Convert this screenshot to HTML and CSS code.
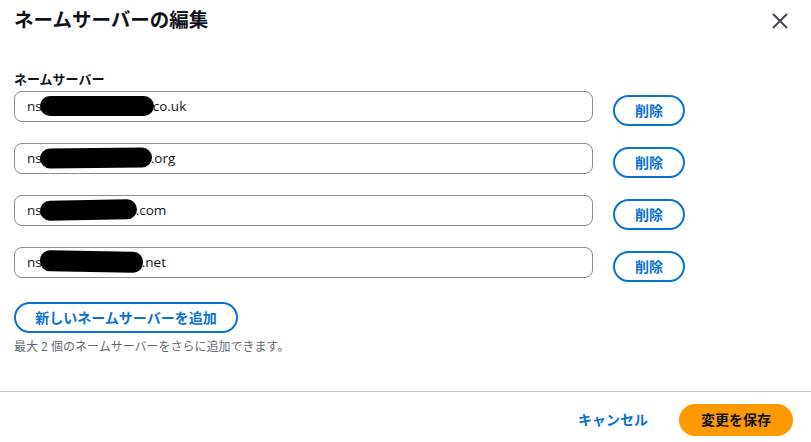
FILE: index.html
```html
<!DOCTYPE html>
<html lang="ja">
<head>
<meta charset="utf-8">
<title>ネームサーバーの編集</title>
<link rel="stylesheet" href="styles.css">
</head>
<body>
<div class="modal">
  <header class="modal-header">
    <h2 class="title">ネームサーバーの編集</h2>
    <button class="close" aria-label="閉じる">
      <svg width="16" height="16" viewBox="0 0 16 16"><path d="M1.5 1.5 L14.5 14.5 M14.5 1.5 L1.5 14.5" stroke="#424650" stroke-width="2" fill="none" stroke-linecap="round"/></svg>
    </button>
  </header>
  <section class="modal-body">
    <div class="label">ネームサーバー</div>
    <div class="rows">
      <div class="row">
        <div class="field">ns<span class="blot b1"></span>co.uk</div>
        <button class="btn-outline del">削除</button>
      </div>
      <div class="row">
        <div class="field">ns<span class="blot b2"></span>.org</div>
        <button class="btn-outline del">削除</button>
      </div>
      <div class="row">
        <div class="field">ns<span class="blot b3"></span>.com</div>
        <button class="btn-outline del">削除</button>
      </div>
      <div class="row">
        <div class="field">ns<span class="blot b4"></span>.net</div>
        <button class="btn-outline del">削除</button>
      </div>
    </div>
    <button class="btn-outline add">新しいネームサーバーを追加</button>
    <p class="help">最大 2 個のネームサーバーをさらに追加できます。</p>
  </section>
  <footer class="modal-footer">
    <button class="cancel">キャンセル</button>
    <button class="save">変更を保存</button>
  </footer>
</div>
</body>
</html>
```
FILE: styles.css
```css
html, body {
  margin: 0;
  padding: 0;
  background: #ffffff;
}
body {
  font-family: "Open Sans", "Noto Sans", "Noto Sans CJK JP", sans-serif;
  color: #0f141a;
}
button {
  font-family: inherit;
  cursor: pointer;
}
.modal {
  width: 811px;
  height: 442px;
  overflow: hidden;
}
.modal-header {
  display: flex;
  justify-content: space-between;
  align-items: flex-start;
  padding: 7px 23px 0 14px;
}
.title {
  margin: 0;
  font-size: 19.5px;
  line-height: 26px;
  font-weight: 700;
  color: #0f141a;
}
.close {
  border: none;
  background: none;
  padding: 0;
  margin-top: 6px;
  width: 16px;
  height: 16px;
  display: block;
}
.close svg { display: block; }
.modal-body {
  padding: 0 14px;
}
.label {
  margin-top: 37px;
  font-size: 13px;
  line-height: 18px;
  font-weight: 700;
  margin-bottom: 3px;
}
.rows {
  display: flex;
  flex-direction: column;
  gap: 17px;
}
.row {
  display: flex;
  align-items: flex-start;
  gap: 20px;
}
.field {
  box-sizing: border-box;
  width: 579px;
  height: 31px;
  border: 1px solid #8c8c94;
  border-radius: 8px;
  padding: 0 12px;
  font-size: 13.5px;
  line-height: 29px;
  color: #0f141a;
  white-space: nowrap;
}
.blot {
  display: inline-block;
  vertical-align: middle;
  height: 20px;
  background: #000;
  border-radius: 10px;
  margin: -3px -1px 0 -2px;
}
.b1 { width: 114px; }
.b2 { width: 112px; transform: rotate(-0.5deg); }
.b3 { width: 97px; transform: rotate(-1deg); }
.b4 { width: 103px; height: 21px; transform: rotate(1deg); }
.btn-outline {
  box-sizing: border-box;
  height: 31px;
  border: 2px solid #0972d3;
  border-radius: 16px;
  background: #fff;
  color: #0972d3;
  font-size: 14px;
  font-weight: 700;
  line-height: 27px;
  padding: 0 20px;
  white-space: nowrap;
}
.del {
  width: 72px;
  padding: 0;
  margin-top: 4px;
}
.add {
  margin-top: 20px;
  display: block;
  width: 224px;
  padding: 0;
}
.help {
  margin: 6px 0 0;
  font-size: 12px;
  line-height: 16px;
  color: #656871;
}
.modal-footer {
  margin-top: 36px;
  border-top: 1px solid #c6c6cd;
  padding: 12px 18px 0 14px;
  display: flex;
  justify-content: flex-end;
  align-items: center;
  gap: 11px;
}
.cancel {
  border: none;
  background: none;
  color: #0972d3;
  font-size: 14px;
  font-weight: 700;
  padding: 4px 20px;
  line-height: 24px;
}
.save {
  box-sizing: border-box;
  width: 114px;
  height: 32px;
  border: 2px solid #ff9900;
  border-radius: 16px;
  background: #ff9900;
  color: #0f141a;
  font-size: 14px;
  font-weight: 700;
  line-height: 28px;
  padding: 0;
}
```
